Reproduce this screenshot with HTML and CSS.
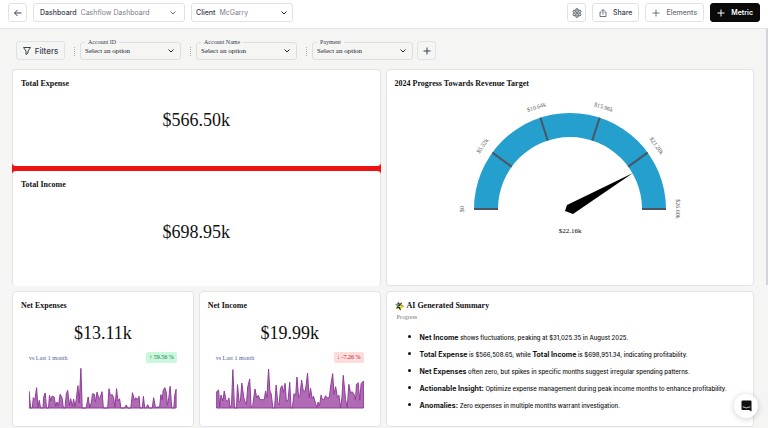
FILE: index.html
```html
<!DOCTYPE html>
<html lang="en">
<head>
<meta charset="utf-8">
<title>Cashflow Dashboard</title>
<link rel="stylesheet" href="styles.css">
</head>
<body>
<header class="topbar">
  <button class="btn btn-icon" aria-label="Back">
    <svg class="icon" viewBox="0 0 16 16"><path d="M15 8H1M7 2 1 8l6 6"/></svg>
  </button>
  <div class="picker picker-wide">
    <label for="dashboard">Dashboard</label>
    <select id="dashboard"><option>Cashflow Dashboard</option></select>
    <svg class="chevron chevron-light" viewBox="0 0 12 12"><path d="m1 3 5 5 5-5"/></svg>
  </div>
  <div class="picker">
    <label for="client">Client</label>
    <select id="client"><option>McGarry</option></select>
    <svg class="chevron" viewBox="0 0 12 12"><path d="m1 3 5 5 5-5"/></svg>
  </div>
  <div class="actions">
    <button class="btn btn-icon" aria-label="Settings">
      <svg class="icon icon-gear" viewBox="0 0 24 24"><path d="M9.8 2h4.4l.6 2.9 2 1.1 2.8-.9 2.2 3.8-2.2 2v2.2l2.2 2-2.2 3.8-2.8-.9-2 1.1-.6 2.9H9.8l-.6-2.9-2-1.1-2.8.9-2.2-3.8 2.2-2v-2.2l-2.2-2 2.2-3.8 2.8.9 2-1.1z"/><circle cx="12" cy="12" r="5.5"/><circle cx="12" cy="12" r="2"/></svg>
    </button>
    <button class="btn">
      <svg class="icon icon-soft" viewBox="0 0 16 16"><path d="M5 6H2v9h12V6h-3M8 11V1M5 4l3-3 3 3"/></svg>Share
    </button>
    <button class="btn btn-elements">
      <svg class="icon" viewBox="0 0 16 16"><path d="M8 1v14M1 8h14"/></svg>Elements
    </button>
    <button class="btn btn-metric">
      <svg class="icon" viewBox="0 0 16 16"><path d="M8 1v14M1 8h14"/></svg>Metric
    </button>
  </div>
</header>

<main class="page">
  <div class="filters">
    <button class="btn btn-filter">
      <svg class="icon" viewBox="0 0 16 16"><path d="M1 1h14l-5 7v4l-4 3V8z"/></svg>Filters
    </button>
    <div class="filter">
      <label for="account-id">Account ID</label>
      <select id="account-id"><option>Select an option</option></select>
      <svg class="chevron" viewBox="0 0 12 12"><path d="m1 3 5 5 5-5"/></svg>
    </div>
    <div class="filter">
      <label for="account-name">Account Name</label>
      <select id="account-name"><option>Select an option</option></select>
      <svg class="chevron" viewBox="0 0 12 12"><path d="m1 3 5 5 5-5"/></svg>
    </div>
    <div class="filter">
      <label for="payment">Payment</label>
      <select id="payment"><option>Select an option</option></select>
      <svg class="chevron" viewBox="0 0 12 12"><path d="m1 3 5 5 5-5"/></svg>
    </div>
    <button class="btn btn-icon btn-filter-add" aria-label="Add filter">
      <svg class="icon" viewBox="0 0 16 16"><path d="M8 1v14M1 8h14"/></svg>
    </button>
  </div>

  <div class="grid">
    <div class="totals">
      <section class="total">
        <h2>Total Expense</h2>
        <p class="figure">$566.50k</p>
      </section>
      <section class="total total-income">
        <h2>Total Income</h2>
        <p class="figure">$698.95k</p>
      </section>
    </div>

    <section class="card card-wide">
      <h2>2024 Progress Towards Revenue Target</h2>
      <svg class="gauge" viewBox="0 0 240 150" role="img" aria-label="Revenue gauge">
        <path fill="#25a0ce" d="M24 117a96 96 0 0 1 192 0h-24a72 72 0 0 0-144 0z"/>
        <g stroke="#4b5563" stroke-width="2">
          <path d="M24 117h24"/>
          <path d="M24 117h24" transform="rotate(36 120 117)"/>
          <path d="M24 117h24" transform="rotate(72 120 117)"/>
          <path d="M24 117h24" transform="rotate(108 120 117)"/>
          <path d="M24 117h24" transform="rotate(144 120 117)"/>
          <path d="M192 117h24"/>
        </g>
        <path d="M183 81 117 113l-2 6 8 3z"/>
        <g class="gauge-label">
          <text transform="translate(14 117) rotate(-90)">$0</text>
          <text transform="translate(34 55) rotate(-54)">$5.32k</text>
          <text transform="translate(87 17) rotate(-18)">$10.64k</text>
          <text transform="translate(153 17) rotate(18)">$15.96k</text>
          <text transform="translate(205 55) rotate(54)">$21.28k</text>
          <text transform="translate(226 117) rotate(90)">$26.60k</text>
        </g>
        <text class="gauge-value" x="120" y="141">$22.16k</text>
      </svg>
    </section>

    <section class="card">
      <h2>Net Expenses</h2>
      <p class="figure">$13.11k</p>
      <div class="compare"><span>vs Last 1 month</span><span class="badge badge-up">↑ 59.56 %</span></div>
      <svg class="spark" viewBox="14 20 447 126" preserveAspectRatio="none" aria-hidden="true">
        <path d="M14 143V93L19 143 24 143 27 112 32 118 37 82 41 143 45 120 49 143 56 143 59 108 63 98 67 143 73 143 76 105 80 122 84 107 90 110 95 138 99 125 103 138 108 102 114 112 118 143 123 143 127 100 131 90 136 135 140 115 145 138 149 116 153 140 157 118 162 76 166 128 171 24 175 143 187 143 193 110 198 143 203 125 206 100 212 102 215 125 220 95 225 115 229 112 235 94 239 143 252 143 256 85 260 105 266 103 270 112 274 140 279 85 283 122 288 115 292 143 303 143 308 134 313 143 322 143 327 97 333 120 337 112 342 118 347 108 350 143 357 143 360 108 364 143 369 143 373 133 378 143 387 143 391 112 397 143 405 139 409 143 413 103 417 118 420 90 425 82 429 95 433 135 437 112 441 78 446 143 452 143 455 105 459 87V143z"/>
      </svg>
    </section>

    <section class="card">
      <h2>Net Income</h2>
      <p class="figure">$19.99k</p>
      <div class="compare"><span>vs Last 1 month</span><span class="badge badge-down">↓ -7.26 %</span></div>
      <svg class="spark" viewBox="14 20 447 126" preserveAspectRatio="none" aria-hidden="true">
        <path d="M16 143V94L22 89 25 140 29 104 35 122 39 92 44 118 49 124 53 113 57 142 61 133 65 28 70 143 76 143 79 73 84 125 88 122 92 68 98 112 102 125 106 133 110 80 116 56 120 140 125 136 132 86 137 112 142 105 147 118 160 118 164 92 168 112 173 26 177 92 181 100 186 143 191 143 196 74 201 128 205 134 209 84 214 76 218 97 223 69 227 123 232 120 237 66 241 143 245 143 250 100 255 106 259 50 264 112 268 105 273 59 278 92 284 92 287 72 291 38 296 112 300 84 305 115 309 108 314 125 319 142 323 125 327 137 332 104 336 118 342 116 345 106 351 113 357 111 361 77 367 40 371 102 376 79 381 110 386 105 391 143 395 112 399 45 406 118 411 142 416 72 421 98 426 94 431 101 436 118 439 72 444 67 449 120 453 70 460 62V143z"/>
      </svg>
    </section>

    <section class="card card-wide">
      <h2 class="summary-title">
        <svg class="sparkles" viewBox="0 0 30 28"><path fill="#222" d="M10 1l4 6 7-4-2 8 9 4-9 4-3 9-5-8-8 2 4-8-6-6 8-1z"/><path fill="#f8df22" d="m18 5 2 8 8 2-7 3-3 8-3-8-7-3 8-2z"/><path fill="#65a37b" d="m8 2 2 6 5 2-5 2-3 5-2-5-4-3 5-1z"/><path fill="#f8df22" d="m7 19 1 3 3 1-3 1-1 3-2-3-2-1 3-1z"/></svg>AI Generated Summary
      </h2>
      <p class="subtitle">Progress</p>
      <ul class="insights">
        <li><strong>Net Income</strong> shows fluctuations, peaking at $31,025.35 in August 2025.</li>
        <li><strong>Total Expense</strong> is $566,508.65, while <strong>Total Income</strong> is $698,951.34, indicating profitability.</li>
        <li><strong>Net Expenses</strong> often zero, but spikes in specific months suggest irregular spending patterns.</li>
        <li><strong>Actionable Insight:</strong> Optimize expense management during peak income months to enhance profitability.</li>
        <li><strong>Anomalies:</strong> Zero expenses in multiple months warrant investigation.</li>
      </ul>
    </section>
  </div>
  <div class="scroll-thumb"></div>
</main>

<button class="chat" aria-label="Open chat">
  <svg viewBox="0 0 22 24"><path fill="#111" d="M3 1h16a2 2 0 0 1 2 2v20l-5-3H3a2 2 0 0 1-2-2V3a2 2 0 0 1 2-2z"/><path fill="none" stroke="#fff" stroke-width="1.5" stroke-linecap="round" d="M4 14q7 4 14 0"/></svg>
</button>
</body>
</html>
```
FILE: styles.css
```css
* {
  box-sizing: border-box;
}

body {
  margin: 0;
  min-height: 100vh;
  display: flex;
  flex-direction: column;
  background: #f5f5f4;
  color: #111;
  font-family: "Liberation Serif", serif;
  font-size: 8px;
}

h2,
p,
ul {
  margin: 0;
}

.topbar {
  display: flex;
  gap: 6px;
  padding: 3px 8px 6px;
  background: #fff;
  border-bottom: 1px solid #e2e4e7;
}

.btn {
  display: flex;
  align-items: center;
  justify-content: center;
  gap: 6px;
  height: 19px;
  padding: 0 6px;
  border: 1px solid #dfe2e6;
  border-radius: 3px;
  background: #fff;
  color: #374151;
  font: 500 7px Inter, sans-serif;
}

.btn-icon {
  width: 19px;
  padding: 0;
}

.icon {
  width: 8px;
  height: 8px;
  flex: none;
  fill: none;
  stroke: currentColor;
  stroke-width: 2;
}

.icon-gear {
  width: 10px;
  height: 10px;
}

.icon-soft {
  color: #6b7280;
}

.chevron {
  width: 6px;
  height: 6px;
  flex: none;
  fill: none;
  stroke: #1f2937;
  stroke-width: 2;
}

.chevron-light {
  margin-right: 3px;
  stroke: #6b7280;
}

select {
  appearance: none;
  flex: 1;
  min-width: 0;
  padding: 0;
  border: 0;
  background: transparent;
}

.picker {
  display: flex;
  align-items: center;
  gap: 4px;
  width: 102px;
  height: 19px;
  padding: 0 5px 0 4px;
  border: 1px solid #dfe2e6;
  border-radius: 3px;
  color: #374151;
  font: 500 7px Inter, sans-serif;
}

.picker-wide {
  width: 152px;
  padding-left: 6px;
}

.picker select {
  color: #7b8089;
  font: 400 7px Inter, sans-serif;
}

.actions {
  display: flex;
  gap: 6px;
  margin-left: auto;
}

.btn-elements {
  color: #6b7280;
}

.btn-metric {
  border-color: #0a0a0a;
  background: #0a0a0a;
  color: #fff;
  font-weight: 600;
}

.page {
  position: relative;
  flex: 1;
  padding: 12px 14px 1px 12px;
}

.scroll-thumb {
  position: absolute;
  top: 0;
  right: 0;
  width: 2px;
  height: 256px;
  background: #d1d4da;
}

.filters {
  display: flex;
  margin: 0 4px 9px;
}

.btn-filter {
  gap: 4px;
  width: 49px;
  background: transparent;
  font-size: 8px;
}

.filter {
  position: relative;
  display: flex;
  align-items: center;
  width: 101px;
  height: 18px;
  margin: 1px 0 0 15px;
  padding: 0 6px 0 4px;
  border: 1px solid #dcdee1;
  border-radius: 3px;
}

.filter::before {
  content: "";
  position: absolute;
  left: -7px;
  top: 4px;
  height: 9px;
  border-left: 1px dotted #a9adb3;
}

.filter label {
  position: absolute;
  left: 4px;
  top: -5px;
  padding: 0 3px;
  background: #f5f5f4;
  color: #374151;
  font-size: 6px;
  line-height: 8px;
}

.filter select {
  color: #111827;
  font: 7px "Liberation Serif", serif;
}

.btn-filter-add {
  margin-left: 4px;
  background: transparent;
}

.grid {
  display: grid;
  grid-template-columns: repeat(4, minmax(0, 1fr));
  grid-template-rows: 217px 136px;
  gap: 5px;
}

.totals {
  grid-column: span 2;
  display: grid;
  grid-template-rows: 97fr 115fr;
  gap: 5px;
  border-radius: 4px;
  background: linear-gradient(#e5e7eb 50px, #ee1111 50px, #ee1111 150px, #fff 150px);
}

.total,
.card {
  border: 1px solid #e2e4e7;
  border-radius: 4px;
  background: #fff;
  padding: 9px 8px 0;
}

.total {
  border-bottom: 0;
}

.total-income {
  border-top: 0;
}

.total .figure {
  padding-top: 20px;
}

.total-income .figure {
  padding-top: 31px;
}

.card-wide {
  grid-column: span 2;
}

h2 {
  font-size: 8px;
  line-height: 10px;
}

.figure {
  font-size: 18px;
  line-height: 22px;
  text-align: center;
}

.gauge {
  display: block;
  width: 240px;
  height: 150px;
  margin: 3px auto 0;
}

.gauge-label {
  fill: #555;
  font-size: 6px;
  text-anchor: middle;
}

.gauge-value {
  font-size: 7px;
  text-anchor: middle;
}

.card .figure {
  padding-top: 11px;
}

.compare {
  display: flex;
  align-items: center;
  justify-content: space-between;
  margin: 8px 8px 4px;
  color: #52609a;
  font-size: 6px;
}

.badge {
  padding: 0 3px;
  border-radius: 2px;
  line-height: 11px;
}

.badge-up {
  background: #c9f8dc;
  color: #167044;
}

.badge-down {
  background: #fddcdc;
  color: #b3202a;
}

.spark {
  display: block;
  width: calc(100% - 16px);
  height: 42px;
  margin: 0 8px;
  fill: #b16bb5;
  stroke: #8d3d98;
  stroke-width: 3;
  stroke-linejoin: round;
}

.summary-title {
  display: flex;
  align-items: center;
  gap: 2px;
}

.sparkles {
  width: 10px;
  height: 10px;
}

.subtitle {
  margin-left: 2px;
  color: #777;
  font-size: 6px;
  line-height: 12px;
}

.insights {
  margin-top: 6px;
  padding-left: 25px;
  list-style: none;
  font: 500 6px/17px Inter, "Liberation Sans", sans-serif;
}

.insights li {
  position: relative;
}

.insights li::before {
  content: "";
  position: absolute;
  left: -12px;
  top: 6px;
  width: 3px;
  height: 3px;
  border-radius: 50%;
  background: #111;
}

.insights strong {
  font-size: 7px;
  font-weight: 700;
  line-height: 1;
}

.chat {
  position: fixed;
  right: 10px;
  bottom: 10px;
  display: grid;
  place-items: center;
  width: 24px;
  height: 24px;
  padding: 0;
  border: 0;
  border-radius: 50%;
  background: #fff;
  box-shadow: 0 1px 6px rgb(0 0 0 / 20%);
}

.chat svg {
  width: 11px;
  height: 12px;
}
```
